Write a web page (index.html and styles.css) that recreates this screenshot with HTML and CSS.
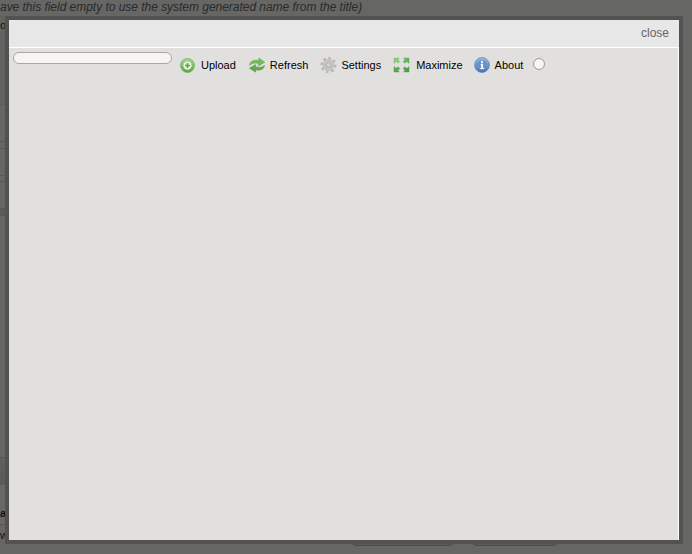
FILE: index.html
```html
<!DOCTYPE html>
<html lang="en">
<head>
    <meta charset="UTF-8">
    <title>File manager</title>
    <link rel="stylesheet" href="styles.css">
</head>
<body>
    <div class="page">
        <p class="hint">ave this field empty to use the system generated name from the title)</p>
        <div class="page-main">
            <div class="side-rows">
                <div class="side-row row-a"><span>o</span></div>
                <div class="side-row row-b"></div>
                <div class="side-row row-c"></div>
                <div class="side-row row-d"></div>
                <div class="side-row row-e"></div>
                <div class="side-row row-f"></div>
                <div class="side-row row-g"></div>
                <div class="side-row row-h"></div>
                <div class="side-row row-i"><span>ag</span></div>
                <div class="side-row row-j"><span>w</span></div>
            </div>
            <div class="page-buttons">
                <span class="page-button btn-one"></span>
                <span class="page-button btn-two"></span>
            </div>
        </div>
    </div>

    <div class="modal">
        <div class="modal-header">
            <a class="close-link">close</a>
        </div>
        <div class="modal-body">
            <div class="toolbar">
                <input type="text" class="search-box">
                <a class="tool tool-upload">
                    <svg class="icon" width="15" height="15" viewBox="0 0 16 16">
                        <defs>
                            <linearGradient id="greenBall" x1="0" y1="0" x2="0" y2="1">
                                <stop offset="0" stop-color="#a9da93"/>
                                <stop offset="1" stop-color="#4fa83f"/>
                            </linearGradient>
                        </defs>
                        <circle cx="8" cy="8" r="7.4" fill="url(#greenBall)" stroke="#6bab5c" stroke-width="0.8"/>
                        <circle cx="8" cy="8" r="4.4" fill="#e9f5e2"/>
                        <path d="M8 5.4v5.2M5.4 8h5.2" stroke="#57a846" stroke-width="1.8"/>
                    </svg>
                    <span>Upload</span>
                </a>
                <a class="tool tool-refresh">
                    <svg class="icon" width="18" height="18" viewBox="0 0 18 18">
                        <path d="M1.5 9.5C1.8 5.2 6 3.4 10.8 4.6V2L16.8 6.2 10.6 10V7.6C7.4 6.6 4 7 1.5 9.5Z" fill="#74bb5e" stroke="#5da34c" stroke-width="0.5"/>
                        <path d="M16.5 9.5C16.2 13.4 12 15 7.6 13.8V16.2L1.4 12.2 7.6 8.6V10.8C10.8 11.8 14 11.6 16.5 9.5Z" fill="#62aa4f" stroke="#549a44" stroke-width="0.5"/>
                    </svg>
                    <span>Refresh</span>
                </a>
                <a class="tool tool-settings">
                    <svg class="icon" width="17" height="18" viewBox="0 0 18 18">
                        <circle cx="9" cy="9" r="7.2" fill="none" stroke="#b4b4b2" stroke-width="2.6" stroke-dasharray="2.6 3"/>
                        <circle cx="9" cy="9" r="5" fill="none" stroke="#c2c2c0" stroke-width="2.6"/>
                        <circle cx="9" cy="9" r="2.8" fill="#d4d4d2" stroke="#8f8f8d" stroke-width="0.8"/>
                    </svg>
                    <span>Settings</span>
                </a>
                <a class="tool tool-maximize">
                    <svg class="icon" width="17" height="18" viewBox="0 0 17 18">
                        <path d="M1 2h5.4L5 3.6 6.8 5.4 5 7.2 3.2 5.4 1 7.4Z" fill="#8ecb85" stroke="#74b86b" stroke-width="0.4"/>
                        <path d="M16 2h-5.4L12 3.6 10.2 5.4 12 7.2 13.8 5.4 16 7.4Z" fill="#66b45e" stroke="#559f4e" stroke-width="0.4"/>
                        <path d="M1 16h5.4L5 14.4 6.8 12.6 5 10.8 3.2 12.6 1 10.6Z" fill="#55a84f" stroke="#4a9a45" stroke-width="0.4"/>
                        <path d="M16 16h-5.4L12 14.4 10.2 12.6 12 10.8 13.8 12.6 16 10.6Z" fill="#4fa24a" stroke="#439541" stroke-width="0.4"/>
                    </svg>
                    <span>Maximize</span>
                </a>
                <a class="tool tool-about">
                    <svg class="icon" width="16" height="16" viewBox="0 0 16 16">
                        <defs>
                            <linearGradient id="blueBall" x1="0" y1="0" x2="0" y2="1">
                                <stop offset="0" stop-color="#9dbee3"/>
                                <stop offset="1" stop-color="#3f74b5"/>
                            </linearGradient>
                        </defs>
                        <circle cx="8" cy="8" r="7.4" fill="url(#blueBall)" stroke="#5a84b8" stroke-width="0.8"/>
                        <circle cx="8" cy="8" r="5" fill="#6492ca"/>
                        <circle cx="8" cy="4.9" r="1.1" fill="#fff"/>
                        <path d="M6.6 6.8H9V11H10V12H6.2V11H7.2V7.8H6.6Z" fill="#fff"/>
                    </svg>
                    <span>About</span>
                </a>
                <span class="spinner"></span>
            </div>
        </div>
    </div>
</body>
</html>
```

FILE: styles.css
```css
html, body {
    margin: 0;
    height: 100%;
}

body {
    background-color: #666665;
    font-family: "Liberation Sans", Arial, sans-serif;
    overflow: hidden;
    position: relative;
}

.page {
    height: 554px;
    display: flex;
    flex-direction: column;
}

.hint {
    margin: 0;
    height: 15px;
    line-height: 15px;
    font-size: 12px;
    font-style: italic;
    letter-spacing: -0.03px;
    color: #2a2a2a;
    white-space: nowrap;
}

.page-main {
    flex: 1;
    display: flex;
}

.side-rows {
    width: 5px;
    flex: none;
    display: flex;
    flex-direction: column;
}

.side-row {
    box-sizing: border-box;
    border-bottom: 1px solid #575756;
    font-size: 11px;
    color: #111;
}

.side-row span {
    display: block;
    white-space: nowrap;
}

.row-a { height: 90px; line-height: 20px; background-color: #636362; border-bottom-color: #5e5e5d; }
.row-b { height: 37px; }
.row-c { height: 7px; }
.row-d { height: 27px; }
.row-e { height: 6px; }
.row-f { height: 27px; }
.row-g { height: 7px; background-color: #5b5b5a; }
.row-h { height: 242px; }
.row-i { height: 67px; line-height: 110px; font-weight: bold; background: linear-gradient(#606060, #5a5a59 40%, #686867 41%); }
.row-j { flex: 1; line-height: 20px; border-bottom: none; }

.page-buttons {
    display: flex;
    align-self: flex-end;
    gap: 14px;
    margin-left: 344px;
    margin-bottom: 8px;
}

.page-button {
    height: 10px;
    box-sizing: border-box;
    border-bottom: 1px solid #4c4c4c;
    border-radius: 0 0 8px 8px;
    background-color: #5a5a59;
}

.btn-one { width: 107px; }
.btn-two { width: 90px; }

.modal {
    position: absolute;
    left: 5px;
    top: 16px;
    width: 670px;
    height: 520px;
    border: 4px solid #525251;
    display: flex;
    flex-direction: column;
}

.modal-header {
    height: 27px;
    background-color: #e7e7e7;
    border-bottom: 1px solid #fff;
    display: flex;
    justify-content: flex-end;
    align-items: center;
    padding-right: 10px;
    flex: none;
}

.close-link {
    font-size: 12px;
    color: #666;
    position: relative;
    top: -1px;
}

.modal-body {
    flex: 1;
    background-color: #e1e0de;
    border-right: 1px solid #fff;
}

.toolbar {
    display: flex;
    align-items: flex-start;
    font-size: 11px;
    color: #000;
    padding: 4px 0 0 4px;
}

.search-box {
    width: 157px;
    height: 10px;
    margin: 0;
    padding: 0;
    border: 1px solid #a9a8a6;
    border-radius: 6px;
    background-color: #f6f5f3;
    box-sizing: content-box;
}

.tool {
    display: flex;
    align-items: center;
    height: 18px;
    margin-top: 4px;
    white-space: nowrap;
}

.icon {
    flex: none;
}

.tool-upload { margin-left: 8px; margin-right: 12px; }
.tool-upload .icon { margin-right: 6px; }
.tool-refresh { margin-right: 12px; }
.tool-refresh .icon { margin-right: 4px; }
.tool-settings { margin-right: 12px; }
.tool-settings .icon { margin-right: 4px; }
.tool-maximize { margin-right: 11px; }
.tool-maximize .icon { margin-right: 6px; }
.tool-about { margin-right: 10px; }
.tool-about .icon { margin-right: 5px; }

.spinner {
    width: 10px;
    height: 10px;
    margin-top: 6px;
    border: 1px solid #9c9b99;
    border-radius: 50%;
    background-color: #f7f6f4;
}
```
